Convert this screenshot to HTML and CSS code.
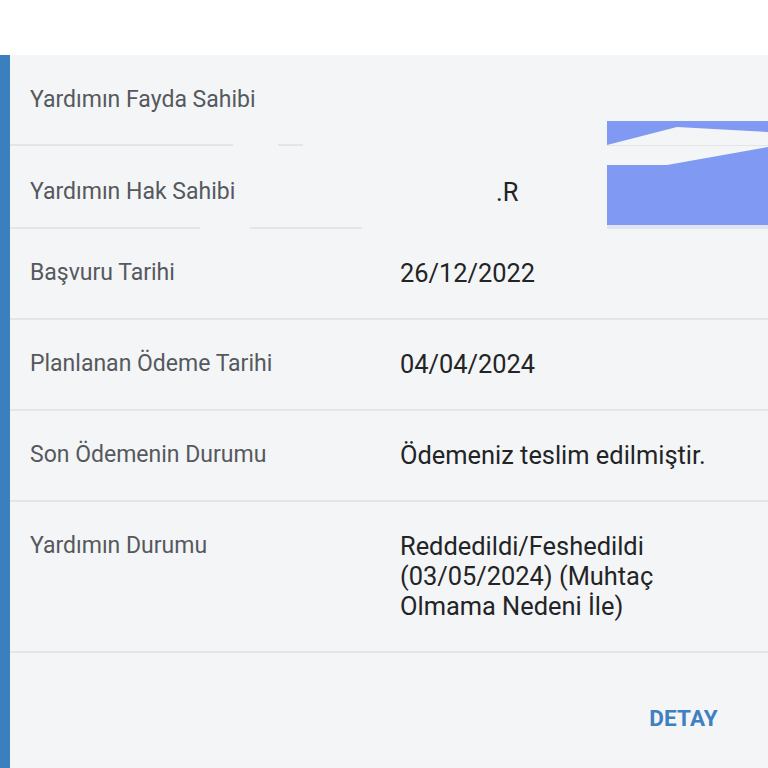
FILE: index.html
```html
<!DOCTYPE html>
<html lang="tr">
<head>
<meta charset="utf-8">
<link rel="stylesheet" href="styles.css">
</head>
<body>
<div class="top"></div>
<div class="card">
  <div class="row row-first">
    <div class="label">Yardımın Fayda Sahibi</div>
    <div class="value"></div>
  </div>
  <div class="row row-second">
    <div class="label">Yardımın Hak Sahibi</div>
    <div class="value"><span class="frag">.R</span></div>
  </div>
  <div class="row">
    <div class="label">Başvuru Tarihi</div>
    <div class="value">26/12/2022</div>
  </div>
  <div class="row">
    <div class="label">Planlanan Ödeme Tarihi</div>
    <div class="value">04/04/2024</div>
  </div>
  <div class="row">
    <div class="label">Son Ödemenin Durumu</div>
    <div class="value">Ödemeniz teslim edilmiştir.</div>
  </div>
  <div class="row">
    <div class="label">Yardımın Durumu</div>
    <div class="value">Reddedildi/Feshedildi (03/05/2024) (Muhtaç Olmama Nedeni İle)</div>
  </div>
  <div class="footer">
    <span class="detay">DETAY</span>
  </div>
  <div class="patch patch-a"></div>
  <div class="patch patch-b"></div>
  <div class="patch patch-c"></div>
  <div class="patch patch-d"></div>
  <svg class="redact" width="161" height="108" viewBox="0 0 161 108">
    <polygon points="0,0 161,0 161,108 0,108" fill="#8099f2"/>
    <polygon points="0,24 70,6 161,11 161,26 60,44 0,44" fill="#f4f5f7"/>
    <rect x="0" y="24" width="161" height="1" fill="#e3e5e8"/>
    <rect x="0" y="104" width="161" height="4" fill="#dfe3f3"/>
  </svg>
</div>
</body>
</html>
```
FILE: styles.css
```css
html, body {
  margin: 0;
  padding: 0;
  background: #ffffff;
}
body {
  font-family: Roboto, "Noto Sans", "Liberation Sans", sans-serif;
  width: 768px;
  height: 768px;
  overflow: hidden;
}
.top {
  height: 55px;
  background: #ffffff;
}
.card {
  position: relative;
  background: #f4f5f7;
  border-left: 10px solid #3c7fbf;
  height: 713px;
}
.row {
  display: flex;
  padding: 29px 0 30px 20px;
  border-bottom: 2px solid #e3e5e8;
  line-height: 30px;
}
.row-first {
  padding-top: 30px;
  padding-bottom: 29px;
}
.row-second {
  padding-top: 31px;
  padding-bottom: 20px;
}
.label {
  width: 370px;
  flex: none;
  font-size: 23px;
  color: #55595e;
}
.value {
  width: 335px;
  flex: none;
  font-size: 25.4px;
  color: #222426;
}
.frag {
  display: inline-block;
  vertical-align: top;
  margin-left: 96px;
  width: 26px;
  overflow: hidden;
  color: #222426;
}
.footer {
  display: flex;
  justify-content: flex-end;
  padding: 52px 50px 0 0;
}
.detay {
  font-size: 22.5px;
  font-weight: 700;
  color: #3f80bf;
  letter-spacing: 0.2px;
}
.patch {
  position: absolute;
  background: #f4f5f7;
  height: 4px;
}
.patch-a {
  top: 88px;
  left: 223px;
  width: 45px;
}
.patch-b {
  top: 88px;
  left: 293px;
  width: 304px;
}
.patch-c {
  top: 171px;
  left: 190px;
  width: 50px;
}
.patch-d {
  top: 171px;
  left: 352px;
  width: 245px;
}
.redact {
  position: absolute;
  top: 66px;
  left: 597px;
}
```
